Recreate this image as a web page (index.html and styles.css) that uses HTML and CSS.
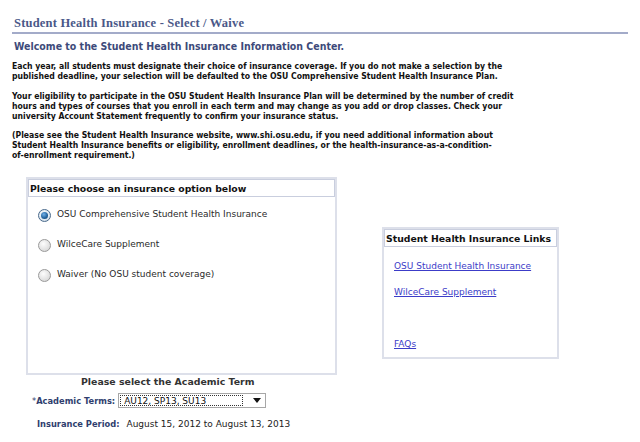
FILE: index.html
```html
<!DOCTYPE html>
<html>
<head>
<meta charset="utf-8">
<title>Student Health Insurance - Select / Waive</title>
<link rel="stylesheet" href="styles.css">
</head>
<body>
<div class="page">
  <h1 class="title">Student Health Insurance - Select / Waive</h1>
  <h2 class="welcome">Welcome to the Student Health Insurance Information Center.</h2>
  <p class="intro first">Each year, all students must designate their choice of insurance coverage. If you do not make a selection by the<br>published deadline, your selection will be defaulted to the OSU Comprehensive Student Health Insurance Plan.</p>
  <p class="intro second">Your eligibility to participate in the OSU Student Health Insurance Plan will be determined by the number of credit<br>hours and types of courses that you enroll in each term and may change as you add or drop classes. Check your<br>university Account Statement frequently to confirm your insurance status.</p>
  <p class="intro">(Please see the Student Health Insurance website, www.shi.osu.edu, if you need additional information about<br>Student Health Insurance benefits or eligibility, enrollment deadlines, or the health-insurance-as-a-condition-<br>of-enrollment requirement.)</p>

  <div class="panels">
    <div class="box options">
      <div class="box-head">Please choose an insurance option below</div>
      <ul class="choices">
        <li><span class="radio checked"></span>OSU Comprehensive Student Health Insurance</li>
        <li><span class="radio"></span>WilceCare Supplement</li>
        <li><span class="radio"></span>Waiver (No OSU student coverage)</li>
      </ul>
    </div>
    <div class="box links">
      <div class="box-head">Student Health Insurance Links</div>
      <a href="#" class="link">OSU Student Health Insurance</a>
      <a href="#" class="link">WilceCare Supplement</a>
      <a href="#" class="link faq">FAQs</a>
    </div>
  </div>

  <div class="term">
    <div class="term-title">Please select the Academic Term</div>
    <div class="term-row">
      <span class="label"><span class="req">*</span>Academic Terms:</span>
      <div class="select"><span class="select-value">AU12, SP13, SU13</span><span class="arrow"></span></div>
    </div>
    <div class="period-row">
      <span class="label">Insurance Period:</span>
      <span class="period">August 15, 2012 to August 13, 2013</span>
    </div>
  </div>
</div>
</body>
</html>
```
FILE: styles.css
```css
html, body {
  margin: 0;
  padding: 0;
  background: #fff;
}

.page {
  width: 640px;
  height: 442px;
  overflow: hidden;
  padding: 16px 12px 0 12px;
  box-sizing: border-box;
  font-family: "DejaVu Sans Condensed", "DejaVu Sans", sans-serif;
}

.title {
  margin: 0;
  padding: 0 0 1px 2px;
  font-family: "Liberation Serif", serif;
  font-size: 12.5px;
  font-weight: bold;
  letter-spacing: 0.2px;
  color: #4a5888;
  border-bottom: 2px solid #a3abc9;
  line-height: 15px;
}

.welcome {
  margin: 6px 0 0 2px;
  font-size: 10.5px;
  font-weight: bold;
  color: #3d4a7a;
  line-height: 13px;
}

.intro {
  margin: 9px 0 0 0;
  font-size: 8.6px;
  font-weight: bold;
  line-height: 10px;
  color: #111;
}

.intro.first {
  margin-top: 8px;
}

.intro.second {
  margin-top: 10px;
}

.panels {
  display: flex;
  align-items: flex-start;
  margin-top: 17px;
  padding-left: 14px;
}

.box {
  border: 2px solid #dde0ea;
  box-sizing: border-box;
  background: #fff;
}

.box-head {
  border: 1px solid #c9cede;
  margin: 0;
  padding: 2px 1px 1px 1px;
  font-family: "DejaVu Sans", sans-serif;
  font-size: 9.3px;
  font-weight: bold;
  color: #111;
  line-height: 13px;
}

.options {
  width: 311px;
  height: 198px;
}

.choices {
  list-style: none;
  margin: 10px 0 0 0;
  padding: 0 0 0 10px;
  font-family: "DejaVu Sans", sans-serif;
  font-size: 9px;
  color: #2a2a2a;
}

.choices li {
  display: flex;
  align-items: center;
  height: 14px;
  margin-bottom: 16px;
}

.radio {
  width: 11px;
  height: 11px;
  border-radius: 50%;
  border: 1px solid #9a9a9a;
  background: radial-gradient(circle at 40% 35%, #fdfdfd 0%, #e4e4e4 55%, #cfcfcf 100%);
  margin: 3px 6px 0 0;
  position: relative;
  flex: none;
}

.radio.checked {
  border-color: #4a6a8c;
  background: radial-gradient(circle at 45% 40%, #ffffff 0%, #dfe8f0 60%, #b7c7d6 100%);
}

.radio.checked::after {
  content: "";
  position: absolute;
  left: 2px;
  top: 2px;
  width: 7px;
  height: 7px;
  border-radius: 50%;
  background: radial-gradient(circle at 40% 35%, #6fb0e8 0%, #1f5f9a 60%, #123f6a 100%);
}

.links {
  margin: 50px 0 0 45px;
  width: 177px;
  height: 132px;
  display: flex;
  flex-direction: column;
}

.link {
  font-family: "DejaVu Sans", sans-serif;
  font-size: 9px;
  color: #3c3cc8;
  text-decoration: underline;
  margin-left: 10px;
  line-height: 11px;
}

.links .link:nth-of-type(1) {
  margin-top: 14px;
}

.links .link:nth-of-type(2) {
  margin-top: 15px;
}

.links .link.faq {
  margin-top: auto;
  margin-bottom: 7px;
}

.term {
  margin-top: 0;
  font-family: "DejaVu Sans", sans-serif;
}

.term-title {
  margin: 0 0 0 69px;
  font-size: 9.4px;
  font-weight: bold;
  color: #333;
  line-height: 13px;
}

.term-row {
  display: flex;
  align-items: center;
  margin: 5px 0 0 20px;
}

.label {
  font-size: 8.3px;
  font-weight: bold;
  color: #2f3e6e;
}

.req {
  color: #2f3e6e;
  font-weight: normal;
}

.select {
  margin-left: 3px;
  width: 148px;
  height: 15px;
  border: 1px solid #a7a7a7;
  box-sizing: border-box;
  display: flex;
  align-items: center;
  background: #fff;
  position: relative;
}

.select-value {
  margin: 1px;
  padding-left: 3px;
  width: 123px;
  height: 11px;
  border: 1px dotted #333;
  box-sizing: border-box;
  font-size: 9px;
  line-height: 10px;
  color: #111;
  white-space: nowrap;
}

.arrow {
  margin-left: 9px;
  width: 0;
  height: 0;
  border-left: 4px solid transparent;
  border-right: 4px solid transparent;
  border-top: 5px solid #111;
}

.period-row {
  display: flex;
  align-items: center;
  margin: 11px 0 0 25px;
}

.period {
  margin-left: 7px;
  font-size: 9px;
  color: #222;
}
```
